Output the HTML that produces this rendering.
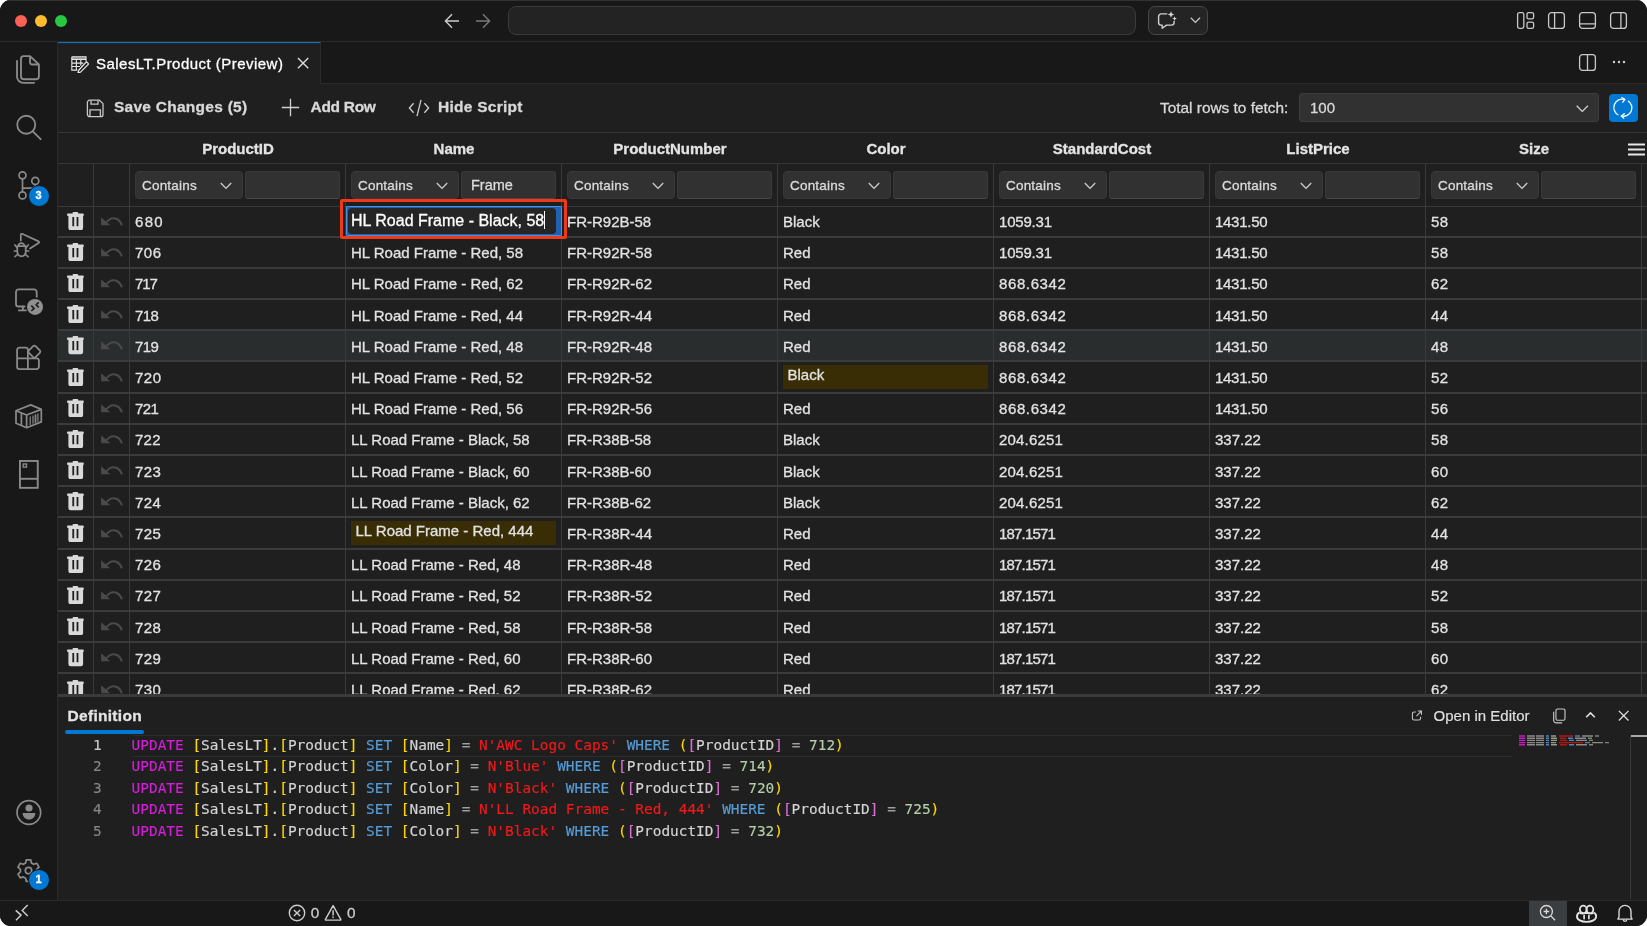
<!DOCTYPE html>
<html lang="en"><head><meta charset="utf-8"><title>SalesLT.Product (Preview)</title>
<style>
*{box-sizing:border-box;margin:0;padding:0}
html,body{width:1647px;height:926px;overflow:hidden;background:#ffffff}
body{font-family:"Liberation Sans",sans-serif;color:#cccccc;position:relative;-webkit-text-stroke:0.300px currentColor}
.win{will-change:transform;position:absolute;left:0;top:0;width:1647px;height:926px;background:#1f1f1f;border-radius:11px;overflow:hidden}
.abs{position:absolute}
svg{display:block}
/* title bar */
.titlebar{position:absolute;left:0;top:0;width:1647px;height:42px;background:#181818;border-bottom:1px solid #2b2b2b;box-shadow:inset 0 1px 0 #323232}
.tl{position:absolute;top:14.700px;width:12.600px;height:12.600px;border-radius:50%}
.cmd{position:absolute;left:508px;top:6px;width:628px;height:29px;border:1px solid #3b3b3b;border-radius:8px;background:#232323}
.chatbtn{position:absolute;left:1148px;top:6px;width:60px;height:29px;border:1px solid #484848;border-radius:7px;background:#242424}
/* activity bar */
.actbar{position:absolute;left:0;top:42px;width:58px;height:858px;background:#181818;border-right:1px solid #2b2b2b}
.actbar svg{position:absolute}
.badge{position:absolute;width:22px;height:22px;border-radius:50%;background:#0078d4;border:1.500px solid #181818;color:#fff;font-size:11px;font-weight:bold;text-align:center;line-height:19px}
/* tabs */
.tabbar{position:absolute;left:58px;top:42px;width:1589px;height:42px;background:#181818;border-bottom:1px solid #2b2b2b}
.tab{position:absolute;left:0;top:0;width:263px;height:42px;background:#1f1f1f;border-top:1px solid #256a9e;border-right:1px solid #2b2b2b}
.tab .lbl{position:absolute;left:38px;top:11px;font-size:15px;letter-spacing:0.47px;line-height:20px;color:#ffffff;white-space:nowrap}
/* toolbar */
.toolbar{position:absolute;left:58px;top:84px;width:1589px;height:49px;background:#1f1f1f;border-bottom:1px solid #353535}
.tbtn{position:absolute;top:13.100px;font-size:15.500px;letter-spacing:0.26px;line-height:20px;font-weight:bold;color:#d8d8d8;white-space:nowrap}
.tlabel{position:absolute;top:14px;font-size:15.4px;line-height:20px;color:#d8d8d8;white-space:nowrap}
.rowsel{position:absolute;left:1241px;top:9px;width:300px;height:29px;background:#313131;border:1px solid #3c3c3c;border-radius:3px;color:#d8d8d8;font-size:15px;line-height:27px;padding-left:10px}
.refresh{position:absolute;left:1551px;top:9.600px;width:28.600px;height:28.500px;background:#0078d4;border-radius:4px}
/* grid */
.grid{position:absolute;left:58px;top:133px;width:1589px;height:562px;overflow:hidden;background:#1f1f1f}
.ghead{position:absolute;left:0;top:0;width:1589px;height:31px;border-bottom:1px solid #353535}
.hc{position:absolute;top:0;height:30px;line-height:31px;text-align:center;font-weight:bold;font-size:15px;color:#e4e4e4}
.hmenu{position:absolute;left:1570px;top:10px}
.gfilter{position:absolute;left:0;top:31px;width:1589px;height:43px;border-bottom:1px solid #3a3a3a}
.vl{position:absolute;top:0;width:1px;height:100%;background:#383838}
.fsel{position:absolute;top:7px;width:107.5px;height:28px;background:#313131;border-radius:4px;border-bottom:1px solid #3f3f3f;color:#dcdcdc;font-size:13.5px;letter-spacing:0.2px;line-height:27.600px;padding-left:6px;border:1px solid #383838}
.fsel svg{position:absolute;left:84px;top:9.500px}
.finp{position:absolute;top:7px;width:95px;height:28px;background:#313131;border-radius:3px;border:1px solid #3a3a3a;border-bottom:1px solid #484848;color:#dcdcdc;font-size:14.500px;line-height:27.200px;padding-left:9px}
.grow{position:absolute;left:0;width:1589px;height:31.2px;border-bottom:2px solid #3b3b3b}
.vline{position:absolute;top:31px;width:1px;height:540px;background:#3a3a3a}
.grow.hov{background:#2a2d2e}
.grow .c{position:absolute;top:0;height:100%;font-size:15px;line-height:30px;color:#e2e2e2;white-space:nowrap;overflow:hidden}
.grow .c .t{position:absolute;left:5px;top:0.5px}
.grow .ic svg{position:absolute}
.dirty{position:absolute;left:5px;top:2px;right:6px;height:24px;background:#382d04;line-height:19px;padding-left:4.500px;color:#e2e2e2}
/* definition panel */
.split{position:absolute;left:58px;top:694px;width:1589px;height:3px;background:#3a3a3a}
.panel{position:absolute;left:58px;top:697px;width:1589px;height:203px;background:#1f1f1f}
.code{position:absolute;left:0;top:37.500px;-webkit-text-stroke:0.150px;font-family:"DejaVu Sans Mono","Liberation Mono",monospace;font-size:14.430px;line-height:21.500px;white-space:pre;color:#d4d4d4}
.ln{position:absolute;left:0;top:37.500px;width:43.600px;text-align:right;-webkit-text-stroke:0.150px;font-family:"DejaVu Sans Mono","Liberation Mono",monospace;font-size:14.430px;line-height:21.500px;color:#858585;white-space:pre}
.o{color:#a0a0a0}.k1{color:#d31fd8}.k2{color:#569cd6}.b1{color:#ffd700}.b2{color:#da70d6}.s{color:#f51818}.n{color:#b5cea8}
/* status bar */
.status{position:absolute;left:0;top:900px;width:1647px;height:26px;background:#181818;border-top:1px solid #2b2b2b;font-size:14.5px;color:#cccccc}

</style></head>
<body>
<div class="win">
<!-- ============ TITLE BAR ============ -->
<div class="titlebar">
  <div class="tl" style="left:14.700px;background:#fe5f57"></div>
  <div class="tl" style="left:34.700px;background:#febc2e"></div>
  <div class="tl" style="left:54.700px;background:#28c840"></div>
  <svg class="abs" style="left:444px;top:13px" width="16" height="16" viewBox="0 0 16 16"><path d="M8 1.2L1.4 8L8 14.8M1.6 8H15" fill="none" stroke="#cccccc" stroke-width="1.4"/></svg>
  <svg class="abs" style="left:475px;top:13px" width="16" height="16" viewBox="0 0 16 16"><path d="M8 1.2L14.6 8L8 14.8M14.4 8H1" fill="none" stroke="#7a7a7a" stroke-width="1.4"/></svg>
  <div class="cmd"></div>
  <div class="chatbtn">
    <svg class="abs" style="left:8px;top:4px" width="22" height="20" viewBox="0 0 22 20"><path d="M10.3 2.9H4.2a2.6 2.6 0 0 0-2.6 2.6v6a2.6 2.6 0 0 0 2.6 2.6h1v3.2l4.3-3.2h5a2.6 2.6 0 0 0 2.6-2.6V10" fill="none" stroke="#d0d0d0" stroke-width="1.4" stroke-linejoin="round"/><path d="M14 0.3l.9 2.3 2.3.9-2.3.9-.9 2.3-.9-2.3-2.3-.9 2.3-.9z M17.6 5.2l.7 1.7 1.7.7-1.7.7-.7 1.7-.7-1.7-1.7-.7 1.7-.7z" fill="#d8d8d8"/></svg>
    <svg class="abs" style="left:40.500px;top:10px" width="11" height="7" viewBox="0 0 11 7"><path d="M0.800 0.800l4.600 4.600 4.600-4.600" fill="none" stroke="#c8c8c8" stroke-width="1.300"/></svg>
  </div>
  <!-- layout icons -->
  <svg class="abs" style="left:1516px;top:11px" width="19" height="19" viewBox="0 0 19 19"><rect x="1.6" y="1.6" width="6.2" height="15.8" rx="1.8" fill="none" stroke="#c8c8c8" stroke-width="1.3"/><rect x="11" y="1.6" width="6.6" height="6.2" rx="1.6" fill="none" stroke="#c8c8c8" stroke-width="1.3"/><rect x="11" y="11.2" width="6.6" height="6.2" rx="1.6" fill="none" stroke="#c8c8c8" stroke-width="1.3"/></svg>
  <svg class="abs" style="left:1547px;top:11px" width="19" height="19" viewBox="0 0 19 19"><rect x="1.6" y="1.6" width="15.8" height="15.8" rx="3" fill="none" stroke="#c8c8c8" stroke-width="1.3"/><path d="M7.6 1.6v15.8" stroke="#c8c8c8" stroke-width="1.3"/></svg>
  <svg class="abs" style="left:1578px;top:11px" width="19" height="19" viewBox="0 0 19 19"><rect x="1.6" y="1.6" width="15.8" height="15.8" rx="3" fill="none" stroke="#c8c8c8" stroke-width="1.3"/><path d="M1.6 12.8h15.8" stroke="#c8c8c8" stroke-width="1.3"/></svg>
  <svg class="abs" style="left:1609.400px;top:11px" width="19" height="19" viewBox="0 0 19 19"><rect x="1.6" y="1.6" width="15.8" height="15.8" rx="3" fill="none" stroke="#c8c8c8" stroke-width="1.3"/><path d="M11.900 1.6v15.8" stroke="#c8c8c8" stroke-width="1.3"/></svg>
</div>

<!-- ============ ACTIVITY BAR ============ -->
<div class="actbar">
  <!-- files -->
  <svg style="left:15px;top:12px" width="27" height="32" viewBox="0 0 27 32"><g fill="none" stroke="#8a8a8a" stroke-width="1.85" stroke-linejoin="round"><path d="M8.600 2.100H15L23.900 10.500V22.600a2.600 2.600 0 0 1-2.600 2.600H8.600a2.600 2.600 0 0 1-2.600-2.600V4.700a2.600 2.600 0 0 1 2.600-2.600z"/><path d="M15 2.100V8.300a2.200 2.200 0 0 0 2.200 2.200H23.900"/><path d="M2 6.200V22.500a6.400 6.400 0 0 0 6.400 6.400H19.800"/></g></svg>
  <!-- search -->
  <svg style="left:15px;top:72px" width="28" height="28" viewBox="0 0 28 28"><circle cx="11.250" cy="10.700" r="9" fill="none" stroke="#8a8a8a" stroke-width="1.85"/><path d="M17.800 17.400l7.800 7.800" stroke="#8a8a8a" stroke-width="1.900" stroke-linecap="round"/></svg>
  <!-- source control -->
  <svg style="left:16px;top:128px" width="26" height="31" viewBox="0 0 26 31"><g fill="none" stroke="#8a8a8a" stroke-width="1.700"><circle cx="6.500" cy="5.300" r="3.500"/><circle cx="6.500" cy="25.400" r="3.500"/><circle cx="19.300" cy="10.900" r="3.500"/><path d="M6.500 8.900V21.800M19.300 14.500C19.300 17 18 18.200 15 18.200H6.500"/></g></svg>
  <div class="badge" style="left:27.500px;top:142.500px">3</div>
  <!-- debug -->
  <svg style="left:12px;top:188px" width="30" height="30" viewBox="0 0 30 30"><g fill="none" stroke="#8a8a8a" stroke-width="1.750" stroke-linecap="round" stroke-linejoin="round"><path d="M8.800 10.500V5Q8.800 3.200 10.600 4L26.600 11.400Q27.800 12.200 26.600 13L18 18.500"/><path d="M5.300 16.200H13.700V22.100a4.200 4.200 0 0 1-8.400 0z"/><path d="M6.500 16a3 2.800 0 0 1 6 0"/><path d="M5.300 18L2.900 14.900M13.700 18L16.200 14.900M5.300 21H2.300M13.700 21H16.700M6 24L3 26.700M13 24L16 26.700" stroke-width="1.600"/></g></svg>
  <!-- remote explorer -->
  <svg style="left:14px;top:246px" width="30" height="28" viewBox="0 0 30 28"><g fill="none" stroke="#8a8a8a" stroke-width="1.800"><path d="M22.700 9.400V4a2.600 2.600 0 0 0-2.600-2.600H4.600a2.600 2.600 0 0 0-2.600 2.600V15.900a2.600 2.600 0 0 0 2.600 2.600H11.300"/><path d="M8.900 18.500V22.400M4.800 22.400H11.900" stroke-linecap="round"/></g><circle cx="21" cy="18.900" r="8" fill="#909090"/><path d="M17.300 17.600L20.100 20.400L17.300 23M24.700 14.400L22.100 16.800L24.700 19.400" fill="none" stroke="#181818" stroke-width="1.500"/></svg>
  <!-- extensions -->
  <svg style="left:15px;top:302px" width="28" height="28" viewBox="0 0 28 28"><g fill="none" stroke="#8a8a8a" stroke-width="1.800"><path d="M4.400 3.700H10.600a2.300 2.300 0 0 1 2.300 2.300V25.100H4.400a2.300 2.300 0 0 1-2.300-2.300V6a2.300 2.300 0 0 1 2.300-2.300z"/><path d="M2.100 14.300H21.600a2.300 2.300 0 0 1 2.300 2.300V22.800a2.300 2.300 0 0 1-2.300 2.300H12.900"/><rect x="14.650" y="2.900" width="9.400" height="9.400" rx="1.700" transform="rotate(45 19.350 7.600)"/></g></svg>
  <!-- container -->
  <svg style="left:14px;top:361px" width="30" height="27" viewBox="0 0 30 27"><g fill="none" stroke="#8a8a8a" stroke-width="1.700" stroke-linejoin="round"><path d="M2 7.700L16.700 1.900L27.300 6.400V18.900L12.600 24.700L2 20.200z"/><path d="M2 7.700L12.600 12L27.300 6.400M12.600 12V24.700M7.400 10V22.500"/><path d="M16.200 13.500v8.400M19 12.400v8.400M23.900 10.600v8.200" stroke-width="1.200"/><path d="M21.500 11.400v8.400" stroke-width="1.700"/></g></svg>
  <!-- notebook -->
  <svg style="left:18px;top:417px" width="22" height="31" viewBox="0 0 22 31"><g fill="none" stroke="#8a8a8a"><rect x="1.950" y="1.950" width="17.800" height="26.900" stroke-width="1.900"/><path d="M1.950 19.800h17.800" stroke-width="1.900"/><rect x="5.200" y="5" width="3.300" height="3.100" stroke-width="1.400"/></g></svg>
  <!-- account -->
  <svg style="left:15px;top:757px" width="28" height="28" viewBox="0 0 28 28"><circle cx="13.850" cy="13.500" r="11.800" fill="none" stroke="#8a8a8a" stroke-width="1.700"/><circle cx="14" cy="9" r="3.600" fill="#8a8a8a"/><path d="M7.600 14H20.400c0 3.800-2.800 6.500-6.400 6.500S7.600 17.800 7.600 14z" fill="#8a8a8a"/></svg>
  <!-- settings gear -->
  <svg style="left:15.300px;top:815.800px" width="27" height="27" viewBox="0 0 27 27"><path d="M11.300 1.800h4.400l.7 3.200 2.300 1.300 3.100-1 2.200 3.800-2.400 2.200v2.600l2.400 2.200-2.200 3.800-3.100-1-2.300 1.300-.7 3.200h-4.400l-.7-3.200-2.300-1.300-3.100 1-2.200-3.800 2.400-2.200v-2.600l-2.400-2.200 2.200-3.800 3.100 1 2.300-1.300z" fill="none" stroke="#8a8a8a" stroke-width="1.700" stroke-linejoin="round"/><circle cx="13.500" cy="12.600" r="3.200" fill="none" stroke="#8a8a8a" stroke-width="1.700"/></svg>
  <div class="badge" style="left:27.500px;top:827.300px">1</div>
</div>

<!-- ============ TAB BAR ============ -->
<div class="tabbar">
  <div class="tab">
    <div class="abs" style="left:0;top:0;width:262px;height:1px;background:#0a2c4c"></div>
    <svg class="abs" style="left:12.500px;top:12.500px" width="18.700" height="17.600" viewBox="0 0 20 19"><rect x="0.800" y="0.800" width="15.300" height="2.800" fill="#8a8a8a"/><path d="M0.800 0.800H16.100V5.800M0.800 0.800V15.300H6.800M0.800 3.600H16.100M0.800 7.700H13.200M0.800 11.300H9.600M5.700 3.600V15.300M10.500 3.600V10.400" fill="none" stroke="#e4e4e4" stroke-width="1.250"/><path d="M16.600 6.200L19 8.600L10.200 17.400L7.400 18.200L8.200 15.400z" fill="#1f1f1f" stroke="#e8e8e8" stroke-width="1.250" stroke-linejoin="round"/></svg>
    <span class="lbl">SalesLT.Product (Preview)</span>
    <svg class="abs" style="left:238.600px;top:14px" width="12.200" height="12.200" viewBox="0 0 13 13"><path d="M1 1l11 11M12 1L1 12" stroke="#e0e0e0" stroke-width="1.400"/></svg>
  </div>
  <svg class="abs" style="left:1520px;top:11px" width="19" height="19" viewBox="0 0 19 19"><rect x="1.600" y="1.600" width="15.800" height="15.800" rx="3" fill="none" stroke="#c8c8c8" stroke-width="1.300"/><path d="M9.500 1.600v15.800" stroke="#c8c8c8" stroke-width="1.300"/></svg>
  <svg class="abs" style="left:1554px;top:18px" width="14" height="4" viewBox="0 0 14 4"><circle cx="2" cy="2" r="1.200" fill="#d0d0d0"/><circle cx="7" cy="2" r="1.200" fill="#d0d0d0"/><circle cx="12" cy="2" r="1.200" fill="#d0d0d0"/></svg>
</div>

<!-- ============ TOOLBAR ============ -->
<div class="toolbar">
  <svg class="abs" style="left:28px;top:15px" width="19" height="19" viewBox="0 0 19 19"><path d="M3.600 1.200h9.800l3.600 3.400v10.800a2.200 2.200 0 0 1-2.200 2.200H3.600a2.200 2.200 0 0 1-2.200-2.200V3.400a2.200 2.200 0 0 1 2.200-2.200z" fill="none" stroke="#c8c8c8" stroke-width="1.300" stroke-linejoin="round"/><path d="M5 1.400v3.800h7V1.400M4 17.400v-6.600h10.400v6.600" fill="none" stroke="#c8c8c8" stroke-width="1.300"/></svg>
  <span class="tbtn" style="left:56px">Save Changes (5)</span>
  <svg class="abs" style="left:223px;top:14px" width="19" height="19" viewBox="0 0 19 19"><path d="M9.500 0.800v17.400M0.800 9.500h17.400" stroke="#d0d0d0" stroke-width="1.300"/></svg>
  <span class="tbtn" style="left:252.500px;letter-spacing:-0.300px">Add Row</span>
  <svg class="abs" style="left:350px;top:15px" width="22" height="18" viewBox="0 0 22 18"><path d="M5.600 4.200L1.400 9l4.200 4.800M16.400 4.200L20.600 9l-4.200 4.800M13 0.800L9 17.200" fill="none" stroke="#d0d0d0" stroke-width="1.300"/></svg>
  <span class="tbtn" style="left:380px">Hide Script</span>
  <span class="tlabel" style="left:1102px">Total rows to fetch:</span>
  <div class="rowsel">100<svg class="abs" style="left:276.100px;top:10.900px" width="12.600" height="7.400" viewBox="0 0 12.600 7.400"><path d="M0.700 0.700l5.600 5.700 5.600-5.700" fill="none" stroke="#d0d0d0" stroke-width="1.300"/></svg></div>
  <div class="refresh"><svg class="abs" style="left:3px;top:3px" width="23" height="23" viewBox="0 0 23 23"><g fill="none" stroke="#eaf5ff" stroke-width="1.400"><path d="M12.700 2.500A8.400 8.400 0 0 0 6.400 18"/><path d="M16 3.800A8.400 8.400 0 0 1 9.300 19"/><path d="M9.400 0.400L12.800 2.500L10.400 5.600"/><path d="M12.800 16.400L9.300 19L12.200 21.600"/></g></svg></div>
</div>

<div class="grid">
<div class="ghead">
<div class="hc" style="left:72px;width:216px">ProductID</div>
<div class="hc" style="left:288px;width:216px">Name</div>
<div class="hc" style="left:504px;width:216px">ProductNumber</div>
<div class="hc" style="left:720px;width:216px">Color</div>
<div class="hc" style="left:936px;width:216px">StandardCost</div>
<div class="hc" style="left:1152px;width:216px">ListPrice</div>
<div class="hc" style="left:1368px;width:216px">Size</div>
<svg class="hmenu" width="17" height="13" viewBox="0 0 17 13"><path d="M0 1.5h17M0 6.5h17M0 11.5h17" stroke="#e6e6e6" stroke-width="1.9"/></svg>
</div>
<div class="gfilter">
<div class="vl" style="left:35px"></div><div class="vl" style="left:71px"></div>
<div class="vl" style="left:287px"></div>
<div class="fsel" style="left:77px"><span>Contains</span><svg width="12" height="8" viewBox="0 0 12 8"><path d="M0.800 1l5.200 5.400L11.200 1" fill="none" stroke="#d0d0d0" stroke-width="1.3"/></svg></div>
<div class="finp" style="left:187px"></div>
<div class="vl" style="left:503px"></div>
<div class="fsel" style="left:293px"><span>Contains</span><svg width="12" height="8" viewBox="0 0 12 8"><path d="M0.800 1l5.200 5.400L11.200 1" fill="none" stroke="#d0d0d0" stroke-width="1.3"/></svg></div>
<div class="finp" style="left:403px">Frame</div>
<div class="vl" style="left:719px"></div>
<div class="fsel" style="left:509px"><span>Contains</span><svg width="12" height="8" viewBox="0 0 12 8"><path d="M0.800 1l5.200 5.400L11.200 1" fill="none" stroke="#d0d0d0" stroke-width="1.3"/></svg></div>
<div class="finp" style="left:619px"></div>
<div class="vl" style="left:935px"></div>
<div class="fsel" style="left:725px"><span>Contains</span><svg width="12" height="8" viewBox="0 0 12 8"><path d="M0.800 1l5.200 5.400L11.200 1" fill="none" stroke="#d0d0d0" stroke-width="1.3"/></svg></div>
<div class="finp" style="left:835px"></div>
<div class="vl" style="left:1151px"></div>
<div class="fsel" style="left:941px"><span>Contains</span><svg width="12" height="8" viewBox="0 0 12 8"><path d="M0.800 1l5.200 5.400L11.200 1" fill="none" stroke="#d0d0d0" stroke-width="1.3"/></svg></div>
<div class="finp" style="left:1051px"></div>
<div class="vl" style="left:1367px"></div>
<div class="fsel" style="left:1157px"><span>Contains</span><svg width="12" height="8" viewBox="0 0 12 8"><path d="M0.800 1l5.200 5.400L11.200 1" fill="none" stroke="#d0d0d0" stroke-width="1.3"/></svg></div>
<div class="finp" style="left:1267px"></div>
<div class="vl" style="left:1583px"></div>
<div class="fsel" style="left:1373px"><span>Contains</span><svg width="12" height="8" viewBox="0 0 12 8"><path d="M0.800 1l5.200 5.400L11.200 1" fill="none" stroke="#d0d0d0" stroke-width="1.3"/></svg></div>
<div class="finp" style="left:1483px"></div>
</div>
<div class="grow" style="top:73.5px">
<div class="c ic" style="left:0;width:36px"><svg style="left:9px;top:5.200px" width="17" height="18.200" viewBox="0 0 17 18.200"><path d="M5.600 0.900a.9.9 0 0 1 .9-.9h3.800a.9.9 0 0 1 .9.900v.700h4.800a.8.800 0 0 1 .8.800v1.300H0V2.400a.8.800 0 0 1 .8-.8h4.800z M1.400 3.700h14.700V16a2.200 2.200 0 0 1-2.200 2.200H3.600A2.200 2.200 0 0 1 1.400 16z" fill="#d9d9d9"/><path d="M6.250 5v9.200M10.500 5v9.200" stroke="#1f1f1f" stroke-width="1.800"/></svg></div>
<div class="c ic" style="left:36px;width:36px"><svg style="left:7px;top:10px" width="22" height="9" viewBox="0 0 22 9"><path d="M0.100 0.200V8.300H9.200z" fill="#4a4a4a"/><path d="M5 5.600C8 1.900 12 0.500 15.200 1.700c2.800 1.100 4.700 3.600 5.700 6.700" fill="none" stroke="#4a4a4a" stroke-width="2"/></svg></div>
<div class="c" style="left:72px;width:216px"><span class="t" style="letter-spacing:1.3px">680</span></div>
<div class="c" style="left:288px;width:216px"></div>
<div class="c" style="left:504px;width:216px"><span class="t">FR-R92B-58</span></div>
<div class="c" style="left:720px;width:216px"><span class="t">Black</span></div>
<div class="c" style="left:936px;width:216px"><span class="t" style="letter-spacing:-0.2px">1059.31</span></div>
<div class="c" style="left:1152px;width:216px"><span class="t" style="letter-spacing:-0.28px">1431.50</span></div>
<div class="c" style="left:1368px;width:216px"><span class="t" style="letter-spacing:0.5px">58</span></div>
</div>
<div class="grow" style="top:104.7px">
<div class="c ic" style="left:0;width:36px"><svg style="left:9px;top:5.200px" width="17" height="18.200" viewBox="0 0 17 18.200"><path d="M5.600 0.900a.9.9 0 0 1 .9-.9h3.800a.9.9 0 0 1 .9.900v.700h4.800a.8.800 0 0 1 .8.800v1.300H0V2.400a.8.800 0 0 1 .8-.8h4.800z M1.400 3.700h14.700V16a2.200 2.200 0 0 1-2.200 2.200H3.600A2.200 2.200 0 0 1 1.400 16z" fill="#d9d9d9"/><path d="M6.250 5v9.200M10.500 5v9.200" stroke="#1f1f1f" stroke-width="1.800"/></svg></div>
<div class="c ic" style="left:36px;width:36px"><svg style="left:7px;top:10px" width="22" height="9" viewBox="0 0 22 9"><path d="M0.100 0.200V8.300H9.200z" fill="#4a4a4a"/><path d="M5 5.600C8 1.900 12 0.500 15.200 1.700c2.800 1.100 4.700 3.600 5.700 6.700" fill="none" stroke="#4a4a4a" stroke-width="2"/></svg></div>
<div class="c" style="left:72px;width:216px"><span class="t" style="letter-spacing:0.5px">706</span></div>
<div class="c" style="left:288px;width:216px"><span class="t">HL Road Frame - Red, 58</span></div>
<div class="c" style="left:504px;width:216px"><span class="t">FR-R92R-58</span></div>
<div class="c" style="left:720px;width:216px"><span class="t">Red</span></div>
<div class="c" style="left:936px;width:216px"><span class="t" style="letter-spacing:-0.2px">1059.31</span></div>
<div class="c" style="left:1152px;width:216px"><span class="t" style="letter-spacing:-0.28px">1431.50</span></div>
<div class="c" style="left:1368px;width:216px"><span class="t" style="letter-spacing:0.5px">58</span></div>
</div>
<div class="grow" style="top:135.9px">
<div class="c ic" style="left:0;width:36px"><svg style="left:9px;top:5.200px" width="17" height="18.200" viewBox="0 0 17 18.200"><path d="M5.600 0.900a.9.9 0 0 1 .9-.9h3.800a.9.9 0 0 1 .9.900v.700h4.800a.8.800 0 0 1 .8.800v1.300H0V2.400a.8.800 0 0 1 .8-.8h4.800z M1.400 3.700h14.700V16a2.200 2.200 0 0 1-2.200 2.200H3.600A2.200 2.200 0 0 1 1.400 16z" fill="#d9d9d9"/><path d="M6.250 5v9.200M10.500 5v9.200" stroke="#1f1f1f" stroke-width="1.800"/></svg></div>
<div class="c ic" style="left:36px;width:36px"><svg style="left:7px;top:10px" width="22" height="9" viewBox="0 0 22 9"><path d="M0.100 0.200V8.300H9.200z" fill="#4a4a4a"/><path d="M5 5.600C8 1.900 12 0.500 15.200 1.700c2.800 1.100 4.700 3.600 5.700 6.700" fill="none" stroke="#4a4a4a" stroke-width="2"/></svg></div>
<div class="c" style="left:72px;width:216px"><span class="t" style="letter-spacing:-1.1px">717</span></div>
<div class="c" style="left:288px;width:216px"><span class="t">HL Road Frame - Red, 62</span></div>
<div class="c" style="left:504px;width:216px"><span class="t">FR-R92R-62</span></div>
<div class="c" style="left:720px;width:216px"><span class="t">Red</span></div>
<div class="c" style="left:936px;width:216px"><span class="t" style="letter-spacing:0.61px">868.6342</span></div>
<div class="c" style="left:1152px;width:216px"><span class="t" style="letter-spacing:-0.28px">1431.50</span></div>
<div class="c" style="left:1368px;width:216px"><span class="t" style="letter-spacing:0.5px">62</span></div>
</div>
<div class="grow" style="top:167.1px">
<div class="c ic" style="left:0;width:36px"><svg style="left:9px;top:5.200px" width="17" height="18.200" viewBox="0 0 17 18.200"><path d="M5.600 0.900a.9.9 0 0 1 .9-.9h3.800a.9.9 0 0 1 .9.900v.700h4.800a.8.800 0 0 1 .8.800v1.300H0V2.400a.8.800 0 0 1 .8-.8h4.800z M1.400 3.700h14.700V16a2.200 2.200 0 0 1-2.200 2.200H3.600A2.200 2.200 0 0 1 1.400 16z" fill="#d9d9d9"/><path d="M6.250 5v9.200M10.500 5v9.200" stroke="#1f1f1f" stroke-width="1.800"/></svg></div>
<div class="c ic" style="left:36px;width:36px"><svg style="left:7px;top:10px" width="22" height="9" viewBox="0 0 22 9"><path d="M0.100 0.200V8.300H9.200z" fill="#4a4a4a"/><path d="M5 5.600C8 1.900 12 0.500 15.200 1.700c2.800 1.100 4.700 3.600 5.700 6.700" fill="none" stroke="#4a4a4a" stroke-width="2"/></svg></div>
<div class="c" style="left:72px;width:216px"><span class="t" style="letter-spacing:-0.6px">718</span></div>
<div class="c" style="left:288px;width:216px"><span class="t">HL Road Frame - Red, 44</span></div>
<div class="c" style="left:504px;width:216px"><span class="t">FR-R92R-44</span></div>
<div class="c" style="left:720px;width:216px"><span class="t">Red</span></div>
<div class="c" style="left:936px;width:216px"><span class="t" style="letter-spacing:0.61px">868.6342</span></div>
<div class="c" style="left:1152px;width:216px"><span class="t" style="letter-spacing:-0.28px">1431.50</span></div>
<div class="c" style="left:1368px;width:216px"><span class="t" style="letter-spacing:0.5px">44</span></div>
</div>
<div class="grow hov" style="top:198.3px">
<div class="c ic" style="left:0;width:36px"><svg style="left:9px;top:5.200px" width="17" height="18.200" viewBox="0 0 17 18.200"><path d="M5.600 0.900a.9.9 0 0 1 .9-.9h3.800a.9.9 0 0 1 .9.900v.700h4.800a.8.800 0 0 1 .8.800v1.300H0V2.400a.8.800 0 0 1 .8-.8h4.800z M1.400 3.700h14.700V16a2.200 2.200 0 0 1-2.200 2.200H3.600A2.200 2.200 0 0 1 1.400 16z" fill="#d9d9d9"/><path d="M6.250 5v9.200M10.500 5v9.200" stroke="#1f1f1f" stroke-width="1.800"/></svg></div>
<div class="c ic" style="left:36px;width:36px"><svg style="left:7px;top:10px" width="22" height="9" viewBox="0 0 22 9"><path d="M0.100 0.200V8.300H9.200z" fill="#4a4a4a"/><path d="M5 5.600C8 1.900 12 0.500 15.200 1.700c2.800 1.100 4.700 3.600 5.700 6.700" fill="none" stroke="#4a4a4a" stroke-width="2"/></svg></div>
<div class="c" style="left:72px;width:216px"><span class="t" style="letter-spacing:-0.6px">719</span></div>
<div class="c" style="left:288px;width:216px"><span class="t">HL Road Frame - Red, 48</span></div>
<div class="c" style="left:504px;width:216px"><span class="t">FR-R92R-48</span></div>
<div class="c" style="left:720px;width:216px"><span class="t">Red</span></div>
<div class="c" style="left:936px;width:216px"><span class="t" style="letter-spacing:0.61px">868.6342</span></div>
<div class="c" style="left:1152px;width:216px"><span class="t" style="letter-spacing:-0.28px">1431.50</span></div>
<div class="c" style="left:1368px;width:216px"><span class="t" style="letter-spacing:0.5px">48</span></div>
</div>
<div class="grow" style="top:229.5px">
<div class="c ic" style="left:0;width:36px"><svg style="left:9px;top:5.200px" width="17" height="18.200" viewBox="0 0 17 18.200"><path d="M5.600 0.900a.9.9 0 0 1 .9-.9h3.800a.9.9 0 0 1 .9.900v.700h4.800a.8.800 0 0 1 .8.800v1.300H0V2.400a.8.800 0 0 1 .8-.8h4.800z M1.400 3.700h14.700V16a2.200 2.200 0 0 1-2.200 2.200H3.600A2.200 2.200 0 0 1 1.400 16z" fill="#d9d9d9"/><path d="M6.250 5v9.200M10.500 5v9.200" stroke="#1f1f1f" stroke-width="1.800"/></svg></div>
<div class="c ic" style="left:36px;width:36px"><svg style="left:7px;top:10px" width="22" height="9" viewBox="0 0 22 9"><path d="M0.100 0.200V8.300H9.200z" fill="#4a4a4a"/><path d="M5 5.600C8 1.900 12 0.500 15.200 1.700c2.800 1.100 4.700 3.600 5.700 6.700" fill="none" stroke="#4a4a4a" stroke-width="2"/></svg></div>
<div class="c" style="left:72px;width:216px"><span class="t" style="letter-spacing:0.5px">720</span></div>
<div class="c" style="left:288px;width:216px"><span class="t">HL Road Frame - Red, 52</span></div>
<div class="c" style="left:504px;width:216px"><span class="t">FR-R92R-52</span></div>
<div class="c" style="left:720px;width:216px"><span class="dirty">Black</span></div>
<div class="c" style="left:936px;width:216px"><span class="t" style="letter-spacing:0.61px">868.6342</span></div>
<div class="c" style="left:1152px;width:216px"><span class="t" style="letter-spacing:-0.28px">1431.50</span></div>
<div class="c" style="left:1368px;width:216px"><span class="t" style="letter-spacing:0.5px">52</span></div>
</div>
<div class="grow" style="top:260.7px">
<div class="c ic" style="left:0;width:36px"><svg style="left:9px;top:5.200px" width="17" height="18.200" viewBox="0 0 17 18.200"><path d="M5.600 0.900a.9.9 0 0 1 .9-.9h3.800a.9.9 0 0 1 .9.900v.700h4.800a.8.800 0 0 1 .8.800v1.300H0V2.400a.8.800 0 0 1 .8-.8h4.800z M1.400 3.700h14.700V16a2.200 2.200 0 0 1-2.200 2.200H3.600A2.200 2.200 0 0 1 1.400 16z" fill="#d9d9d9"/><path d="M6.250 5v9.200M10.500 5v9.200" stroke="#1f1f1f" stroke-width="1.800"/></svg></div>
<div class="c ic" style="left:36px;width:36px"><svg style="left:7px;top:10px" width="22" height="9" viewBox="0 0 22 9"><path d="M0.100 0.200V8.300H9.200z" fill="#4a4a4a"/><path d="M5 5.600C8 1.900 12 0.500 15.200 1.700c2.800 1.100 4.700 3.600 5.700 6.700" fill="none" stroke="#4a4a4a" stroke-width="2"/></svg></div>
<div class="c" style="left:72px;width:216px"><span class="t" style="letter-spacing:-0.6px">721</span></div>
<div class="c" style="left:288px;width:216px"><span class="t">HL Road Frame - Red, 56</span></div>
<div class="c" style="left:504px;width:216px"><span class="t">FR-R92R-56</span></div>
<div class="c" style="left:720px;width:216px"><span class="t">Red</span></div>
<div class="c" style="left:936px;width:216px"><span class="t" style="letter-spacing:0.61px">868.6342</span></div>
<div class="c" style="left:1152px;width:216px"><span class="t" style="letter-spacing:-0.28px">1431.50</span></div>
<div class="c" style="left:1368px;width:216px"><span class="t" style="letter-spacing:0.5px">56</span></div>
</div>
<div class="grow" style="top:291.9px">
<div class="c ic" style="left:0;width:36px"><svg style="left:9px;top:5.200px" width="17" height="18.200" viewBox="0 0 17 18.200"><path d="M5.600 0.900a.9.9 0 0 1 .9-.9h3.800a.9.9 0 0 1 .9.900v.700h4.800a.8.800 0 0 1 .8.800v1.300H0V2.400a.8.800 0 0 1 .8-.8h4.800z M1.400 3.700h14.700V16a2.200 2.200 0 0 1-2.200 2.200H3.600A2.200 2.200 0 0 1 1.400 16z" fill="#d9d9d9"/><path d="M6.250 5v9.200M10.500 5v9.200" stroke="#1f1f1f" stroke-width="1.800"/></svg></div>
<div class="c ic" style="left:36px;width:36px"><svg style="left:7px;top:10px" width="22" height="9" viewBox="0 0 22 9"><path d="M0.100 0.200V8.300H9.200z" fill="#4a4a4a"/><path d="M5 5.600C8 1.900 12 0.500 15.200 1.700c2.800 1.100 4.700 3.600 5.700 6.700" fill="none" stroke="#4a4a4a" stroke-width="2"/></svg></div>
<div class="c" style="left:72px;width:216px"><span class="t" style="letter-spacing:0.25px">722</span></div>
<div class="c" style="left:288px;width:216px"><span class="t">LL Road Frame - Black, 58</span></div>
<div class="c" style="left:504px;width:216px"><span class="t">FR-R38B-58</span></div>
<div class="c" style="left:720px;width:216px"><span class="t">Black</span></div>
<div class="c" style="left:936px;width:216px"><span class="t" style="letter-spacing:0.19px">204.6251</span></div>
<div class="c" style="left:1152px;width:216px"><span class="t">337.22</span></div>
<div class="c" style="left:1368px;width:216px"><span class="t" style="letter-spacing:0.5px">58</span></div>
</div>
<div class="grow" style="top:323.1px">
<div class="c ic" style="left:0;width:36px"><svg style="left:9px;top:5.200px" width="17" height="18.200" viewBox="0 0 17 18.200"><path d="M5.600 0.900a.9.9 0 0 1 .9-.9h3.800a.9.9 0 0 1 .9.900v.700h4.800a.8.800 0 0 1 .8.800v1.300H0V2.400a.8.800 0 0 1 .8-.8h4.800z M1.400 3.700h14.700V16a2.200 2.200 0 0 1-2.200 2.200H3.600A2.200 2.200 0 0 1 1.400 16z" fill="#d9d9d9"/><path d="M6.250 5v9.200M10.500 5v9.200" stroke="#1f1f1f" stroke-width="1.800"/></svg></div>
<div class="c ic" style="left:36px;width:36px"><svg style="left:7px;top:10px" width="22" height="9" viewBox="0 0 22 9"><path d="M0.100 0.200V8.300H9.200z" fill="#4a4a4a"/><path d="M5 5.600C8 1.900 12 0.500 15.200 1.700c2.800 1.100 4.700 3.600 5.700 6.700" fill="none" stroke="#4a4a4a" stroke-width="2"/></svg></div>
<div class="c" style="left:72px;width:216px"><span class="t" style="letter-spacing:0.4px">723</span></div>
<div class="c" style="left:288px;width:216px"><span class="t">LL Road Frame - Black, 60</span></div>
<div class="c" style="left:504px;width:216px"><span class="t">FR-R38B-60</span></div>
<div class="c" style="left:720px;width:216px"><span class="t">Black</span></div>
<div class="c" style="left:936px;width:216px"><span class="t" style="letter-spacing:0.19px">204.6251</span></div>
<div class="c" style="left:1152px;width:216px"><span class="t">337.22</span></div>
<div class="c" style="left:1368px;width:216px"><span class="t" style="letter-spacing:0.5px">60</span></div>
</div>
<div class="grow" style="top:354.3px">
<div class="c ic" style="left:0;width:36px"><svg style="left:9px;top:5.200px" width="17" height="18.200" viewBox="0 0 17 18.200"><path d="M5.600 0.900a.9.9 0 0 1 .9-.9h3.800a.9.9 0 0 1 .9.900v.700h4.800a.8.800 0 0 1 .8.800v1.300H0V2.400a.8.800 0 0 1 .8-.8h4.800z M1.400 3.700h14.700V16a2.200 2.200 0 0 1-2.200 2.200H3.600A2.200 2.200 0 0 1 1.400 16z" fill="#d9d9d9"/><path d="M6.250 5v9.200M10.500 5v9.200" stroke="#1f1f1f" stroke-width="1.800"/></svg></div>
<div class="c ic" style="left:36px;width:36px"><svg style="left:7px;top:10px" width="22" height="9" viewBox="0 0 22 9"><path d="M0.100 0.200V8.300H9.200z" fill="#4a4a4a"/><path d="M5 5.600C8 1.900 12 0.500 15.200 1.700c2.800 1.100 4.700 3.600 5.700 6.700" fill="none" stroke="#4a4a4a" stroke-width="2"/></svg></div>
<div class="c" style="left:72px;width:216px"><span class="t" style="letter-spacing:0.4px">724</span></div>
<div class="c" style="left:288px;width:216px"><span class="t">LL Road Frame - Black, 62</span></div>
<div class="c" style="left:504px;width:216px"><span class="t">FR-R38B-62</span></div>
<div class="c" style="left:720px;width:216px"><span class="t">Black</span></div>
<div class="c" style="left:936px;width:216px"><span class="t" style="letter-spacing:0.19px">204.6251</span></div>
<div class="c" style="left:1152px;width:216px"><span class="t">337.22</span></div>
<div class="c" style="left:1368px;width:216px"><span class="t" style="letter-spacing:0.5px">62</span></div>
</div>
<div class="grow" style="top:385.5px">
<div class="c ic" style="left:0;width:36px"><svg style="left:9px;top:5.200px" width="17" height="18.200" viewBox="0 0 17 18.200"><path d="M5.600 0.900a.9.9 0 0 1 .9-.9h3.800a.9.9 0 0 1 .9.900v.700h4.800a.8.800 0 0 1 .8.800v1.300H0V2.400a.8.800 0 0 1 .8-.8h4.800z M1.400 3.700h14.700V16a2.200 2.200 0 0 1-2.200 2.200H3.600A2.200 2.200 0 0 1 1.400 16z" fill="#d9d9d9"/><path d="M6.250 5v9.200M10.500 5v9.200" stroke="#1f1f1f" stroke-width="1.800"/></svg></div>
<div class="c ic" style="left:36px;width:36px"><svg style="left:7px;top:10px" width="22" height="9" viewBox="0 0 22 9"><path d="M0.100 0.200V8.300H9.200z" fill="#4a4a4a"/><path d="M5 5.600C8 1.900 12 0.500 15.200 1.700c2.800 1.100 4.700 3.600 5.700 6.700" fill="none" stroke="#4a4a4a" stroke-width="2"/></svg></div>
<div class="c" style="left:72px;width:216px"><span class="t" style="letter-spacing:0.4px">725</span></div>
<div class="c" style="left:288px;width:216px"><span class="dirty">LL Road Frame - Red, 444</span></div>
<div class="c" style="left:504px;width:216px"><span class="t">FR-R38R-44</span></div>
<div class="c" style="left:720px;width:216px"><span class="t">Red</span></div>
<div class="c" style="left:936px;width:216px"><span class="t" style="letter-spacing:-0.81px">187.1571</span></div>
<div class="c" style="left:1152px;width:216px"><span class="t">337.22</span></div>
<div class="c" style="left:1368px;width:216px"><span class="t" style="letter-spacing:0.5px">44</span></div>
</div>
<div class="grow" style="top:416.7px">
<div class="c ic" style="left:0;width:36px"><svg style="left:9px;top:5.200px" width="17" height="18.200" viewBox="0 0 17 18.200"><path d="M5.600 0.900a.9.9 0 0 1 .9-.9h3.800a.9.9 0 0 1 .9.900v.700h4.800a.8.800 0 0 1 .8.800v1.300H0V2.400a.8.800 0 0 1 .8-.8h4.800z M1.400 3.700h14.700V16a2.200 2.200 0 0 1-2.200 2.200H3.600A2.200 2.200 0 0 1 1.400 16z" fill="#d9d9d9"/><path d="M6.250 5v9.200M10.500 5v9.200" stroke="#1f1f1f" stroke-width="1.800"/></svg></div>
<div class="c ic" style="left:36px;width:36px"><svg style="left:7px;top:10px" width="22" height="9" viewBox="0 0 22 9"><path d="M0.100 0.200V8.300H9.200z" fill="#4a4a4a"/><path d="M5 5.600C8 1.900 12 0.500 15.200 1.700c2.800 1.100 4.700 3.600 5.700 6.700" fill="none" stroke="#4a4a4a" stroke-width="2"/></svg></div>
<div class="c" style="left:72px;width:216px"><span class="t" style="letter-spacing:0.4px">726</span></div>
<div class="c" style="left:288px;width:216px"><span class="t">LL Road Frame - Red, 48</span></div>
<div class="c" style="left:504px;width:216px"><span class="t">FR-R38R-48</span></div>
<div class="c" style="left:720px;width:216px"><span class="t">Red</span></div>
<div class="c" style="left:936px;width:216px"><span class="t" style="letter-spacing:-0.81px">187.1571</span></div>
<div class="c" style="left:1152px;width:216px"><span class="t">337.22</span></div>
<div class="c" style="left:1368px;width:216px"><span class="t" style="letter-spacing:0.5px">48</span></div>
</div>
<div class="grow" style="top:447.9px">
<div class="c ic" style="left:0;width:36px"><svg style="left:9px;top:5.200px" width="17" height="18.200" viewBox="0 0 17 18.200"><path d="M5.600 0.900a.9.9 0 0 1 .9-.9h3.800a.9.9 0 0 1 .9.900v.700h4.800a.8.800 0 0 1 .8.800v1.300H0V2.400a.8.800 0 0 1 .8-.8h4.800z M1.400 3.700h14.700V16a2.200 2.200 0 0 1-2.200 2.200H3.600A2.200 2.200 0 0 1 1.400 16z" fill="#d9d9d9"/><path d="M6.250 5v9.200M10.500 5v9.200" stroke="#1f1f1f" stroke-width="1.800"/></svg></div>
<div class="c ic" style="left:36px;width:36px"><svg style="left:7px;top:10px" width="22" height="9" viewBox="0 0 22 9"><path d="M0.100 0.200V8.300H9.200z" fill="#4a4a4a"/><path d="M5 5.600C8 1.900 12 0.500 15.200 1.700c2.800 1.100 4.700 3.600 5.700 6.700" fill="none" stroke="#4a4a4a" stroke-width="2"/></svg></div>
<div class="c" style="left:72px;width:216px"><span class="t" style="letter-spacing:0.4px">727</span></div>
<div class="c" style="left:288px;width:216px"><span class="t">LL Road Frame - Red, 52</span></div>
<div class="c" style="left:504px;width:216px"><span class="t">FR-R38R-52</span></div>
<div class="c" style="left:720px;width:216px"><span class="t">Red</span></div>
<div class="c" style="left:936px;width:216px"><span class="t" style="letter-spacing:-0.81px">187.1571</span></div>
<div class="c" style="left:1152px;width:216px"><span class="t">337.22</span></div>
<div class="c" style="left:1368px;width:216px"><span class="t" style="letter-spacing:0.5px">52</span></div>
</div>
<div class="grow" style="top:479.1px">
<div class="c ic" style="left:0;width:36px"><svg style="left:9px;top:5.200px" width="17" height="18.200" viewBox="0 0 17 18.200"><path d="M5.600 0.900a.9.9 0 0 1 .9-.9h3.800a.9.9 0 0 1 .9.900v.700h4.800a.8.800 0 0 1 .8.800v1.300H0V2.400a.8.800 0 0 1 .8-.8h4.800z M1.400 3.700h14.700V16a2.200 2.200 0 0 1-2.200 2.200H3.600A2.200 2.200 0 0 1 1.400 16z" fill="#d9d9d9"/><path d="M6.250 5v9.200M10.500 5v9.200" stroke="#1f1f1f" stroke-width="1.800"/></svg></div>
<div class="c ic" style="left:36px;width:36px"><svg style="left:7px;top:10px" width="22" height="9" viewBox="0 0 22 9"><path d="M0.100 0.200V8.300H9.200z" fill="#4a4a4a"/><path d="M5 5.600C8 1.900 12 0.500 15.200 1.700c2.800 1.100 4.700 3.600 5.700 6.700" fill="none" stroke="#4a4a4a" stroke-width="2"/></svg></div>
<div class="c" style="left:72px;width:216px"><span class="t" style="letter-spacing:0.4px">728</span></div>
<div class="c" style="left:288px;width:216px"><span class="t">LL Road Frame - Red, 58</span></div>
<div class="c" style="left:504px;width:216px"><span class="t">FR-R38R-58</span></div>
<div class="c" style="left:720px;width:216px"><span class="t">Red</span></div>
<div class="c" style="left:936px;width:216px"><span class="t" style="letter-spacing:-0.81px">187.1571</span></div>
<div class="c" style="left:1152px;width:216px"><span class="t">337.22</span></div>
<div class="c" style="left:1368px;width:216px"><span class="t" style="letter-spacing:0.5px">58</span></div>
</div>
<div class="grow" style="top:510.3px">
<div class="c ic" style="left:0;width:36px"><svg style="left:9px;top:5.200px" width="17" height="18.200" viewBox="0 0 17 18.200"><path d="M5.600 0.900a.9.9 0 0 1 .9-.9h3.800a.9.9 0 0 1 .9.900v.700h4.800a.8.800 0 0 1 .8.800v1.300H0V2.400a.8.800 0 0 1 .8-.8h4.800z M1.400 3.700h14.700V16a2.200 2.200 0 0 1-2.200 2.200H3.600A2.200 2.200 0 0 1 1.400 16z" fill="#d9d9d9"/><path d="M6.250 5v9.200M10.500 5v9.200" stroke="#1f1f1f" stroke-width="1.800"/></svg></div>
<div class="c ic" style="left:36px;width:36px"><svg style="left:7px;top:10px" width="22" height="9" viewBox="0 0 22 9"><path d="M0.100 0.200V8.300H9.200z" fill="#4a4a4a"/><path d="M5 5.600C8 1.900 12 0.500 15.200 1.700c2.800 1.100 4.700 3.600 5.700 6.700" fill="none" stroke="#4a4a4a" stroke-width="2"/></svg></div>
<div class="c" style="left:72px;width:216px"><span class="t" style="letter-spacing:0.4px">729</span></div>
<div class="c" style="left:288px;width:216px"><span class="t">LL Road Frame - Red, 60</span></div>
<div class="c" style="left:504px;width:216px"><span class="t">FR-R38R-60</span></div>
<div class="c" style="left:720px;width:216px"><span class="t">Red</span></div>
<div class="c" style="left:936px;width:216px"><span class="t" style="letter-spacing:-0.81px">187.1571</span></div>
<div class="c" style="left:1152px;width:216px"><span class="t">337.22</span></div>
<div class="c" style="left:1368px;width:216px"><span class="t" style="letter-spacing:0.5px">60</span></div>
</div>
<div class="grow" style="top:541.5px">
<div class="c ic" style="left:0;width:36px"><svg style="left:9px;top:5.200px" width="17" height="18.200" viewBox="0 0 17 18.200"><path d="M5.600 0.900a.9.9 0 0 1 .9-.9h3.800a.9.9 0 0 1 .9.900v.700h4.800a.8.800 0 0 1 .8.800v1.300H0V2.400a.8.800 0 0 1 .8-.8h4.800z M1.400 3.700h14.700V16a2.200 2.200 0 0 1-2.200 2.200H3.600A2.200 2.200 0 0 1 1.400 16z" fill="#d9d9d9"/><path d="M6.250 5v9.200M10.500 5v9.200" stroke="#1f1f1f" stroke-width="1.800"/></svg></div>
<div class="c ic" style="left:36px;width:36px"><svg style="left:7px;top:10px" width="22" height="9" viewBox="0 0 22 9"><path d="M0.100 0.200V8.300H9.200z" fill="#4a4a4a"/><path d="M5 5.600C8 1.900 12 0.500 15.200 1.700c2.800 1.100 4.700 3.600 5.700 6.700" fill="none" stroke="#4a4a4a" stroke-width="2"/></svg></div>
<div class="c" style="left:72px;width:216px"><span class="t" style="letter-spacing:0.4px">730</span></div>
<div class="c" style="left:288px;width:216px"><span class="t">LL Road Frame - Red, 62</span></div>
<div class="c" style="left:504px;width:216px"><span class="t">FR-R38R-62</span></div>
<div class="c" style="left:720px;width:216px"><span class="t">Red</span></div>
<div class="c" style="left:936px;width:216px"><span class="t" style="letter-spacing:-0.81px">187.1571</span></div>
<div class="c" style="left:1152px;width:216px"><span class="t">337.22</span></div>
<div class="c" style="left:1368px;width:216px"><span class="t" style="letter-spacing:0.5px">62</span></div>
</div>
<div class="vline" style="left:35px"></div>
<div class="vline" style="left:71px"></div>
<div class="vline" style="left:287px"></div>
<div class="vline" style="left:503px"></div>
<div class="vline" style="left:719px"></div>
<div class="vline" style="left:935px"></div>
<div class="vline" style="left:1151px"></div>
<div class="vline" style="left:1367px"></div>
<div class="vline" style="left:1583px"></div>
</div>

<!-- editing cell overlay -->
<div class="abs" style="left:339.700px;top:199.400px;width:227.400px;height:39.800px;border:3px solid #ef3a19;border-radius:2px"></div>
<div class="abs" style="left:346px;top:206px;width:216px;height:30px;background:#2060b0;border:1px solid #4a90e0;border-radius:1px"></div>
<div class="abs" style="left:348px;top:208px;width:208px;height:26px;background:#252526;border-radius:4px;color:#ffffff;font-size:16px;line-height:25px;padding-left:3px;white-space:nowrap">HL Road Frame - Black, 58<span style="display:inline-block;width:1px;height:18px;background:#fff;vertical-align:-3px"></span></div>

<!-- ============ DEFINITION PANEL ============ -->
<div class="split"></div>
<div class="panel">
  <div class="abs" style="left:9.500px;top:8.700px;font-size:15.500px;letter-spacing:0.300px;font-weight:bold;line-height:20px;color:#e4e4e4">Definition</div>
  <div class="abs" style="left:7px;top:33px;width:79px;height:4px;border-radius:2px;background:#0078d4"></div>
  <svg class="abs" style="left:1352.600px;top:13px" width="11.500" height="11.500" viewBox="0 0 13 13"><path d="M5.400 2.200H3.600a2 2 0 0 0-2 2v5.200a2 2 0 0 0 2 2h5.200a2 2 0 0 0 2-2V7.600M7.600 1.200h4.200v4.200M11.600 1.400L6.200 6.800" fill="none" stroke="#c8c8c8" stroke-width="1.200"/></svg>
  <div class="abs" style="left:1375.600px;top:9px;font-size:15px;line-height:20px;color:#e0e0e0;white-space:nowrap;-webkit-text-stroke:0.150px">Open in Editor</div>
  <svg class="abs" style="left:1493.500px;top:10.500px" width="14.500" height="16" viewBox="0 0 15 17"><rect x="4" y="1" width="9.600" height="12" rx="1.600" fill="none" stroke="#c8c8c8" stroke-width="1.200"/><path d="M1.600 4v9.400a2.400 2.400 0 0 0 2.400 2.400h6.600" fill="none" stroke="#c8c8c8" stroke-width="1.200"/></svg>
  <svg class="abs" style="left:1527px;top:13.500px" width="11" height="7.600" viewBox="0 0 13 9"><path d="M1.400 7.400l5.100-5.200 5.100 5.200" fill="none" stroke="#e0e0e0" stroke-width="1.900"/></svg>
  <svg class="abs" style="left:1559.700px;top:12.600px" width="11.400" height="11.400" viewBox="0 0 13 13"><path d="M1 1l11 11M12 1L1 12" stroke="#e0e0e0" stroke-width="1.500"/></svg>
  <!-- current line box -->
  <div class="abs" style="left:74px;top:38px;width:1380px;height:21.500px;border-top:1px solid #2b2b2b;border-bottom:1px solid #2b2b2b"></div>
  <div class="ln"><span style="color:#cccccc">1</span>
2
3
4
5</div>
  <div class="code" style="left:73.600px"><span class="k1">UPDATE</span> <span class="b1">[</span>SalesLT<span class="b1">]</span>.<span class="b1">[</span>Product<span class="b1">]</span> <span class="k2">SET</span> <span class="b1">[</span>Name<span class="b1">]</span> <span class="o">=</span> <span class="s">N'AWC Logo Caps'</span> <span class="k2">WHERE</span> <span class="b1">(</span><span class="b2">[</span>ProductID<span class="b2">]</span> <span class="o">=</span> <span class="n">712</span><span class="b1">)</span>
<span class="k1">UPDATE</span> <span class="b1">[</span>SalesLT<span class="b1">]</span>.<span class="b1">[</span>Product<span class="b1">]</span> <span class="k2">SET</span> <span class="b1">[</span>Color<span class="b1">]</span> <span class="o">=</span> <span class="s">N'Blue'</span> <span class="k2">WHERE</span> <span class="b1">(</span><span class="b2">[</span>ProductID<span class="b2">]</span> <span class="o">=</span> <span class="n">714</span><span class="b1">)</span>
<span class="k1">UPDATE</span> <span class="b1">[</span>SalesLT<span class="b1">]</span>.<span class="b1">[</span>Product<span class="b1">]</span> <span class="k2">SET</span> <span class="b1">[</span>Color<span class="b1">]</span> <span class="o">=</span> <span class="s">N'Black'</span> <span class="k2">WHERE</span> <span class="b1">(</span><span class="b2">[</span>ProductID<span class="b2">]</span> <span class="o">=</span> <span class="n">720</span><span class="b1">)</span>
<span class="k1">UPDATE</span> <span class="b1">[</span>SalesLT<span class="b1">]</span>.<span class="b1">[</span>Product<span class="b1">]</span> <span class="k2">SET</span> <span class="b1">[</span>Name<span class="b1">]</span> <span class="o">=</span> <span class="s">N'LL Road Frame - Red, 444'</span> <span class="k2">WHERE</span> <span class="b1">(</span><span class="b2">[</span>ProductID<span class="b2">]</span> <span class="o">=</span> <span class="n">725</span><span class="b1">)</span>
<span class="k1">UPDATE</span> <span class="b1">[</span>SalesLT<span class="b1">]</span>.<span class="b1">[</span>Product<span class="b1">]</span> <span class="k2">SET</span> <span class="b1">[</span>Color<span class="b1">]</span> <span class="o">=</span> <span class="s">N'Black'</span> <span class="k2">WHERE</span> <span class="b1">(</span><span class="b2">[</span>ProductID<span class="b2">]</span> <span class="o">=</span> <span class="n">732</span><span class="b1">)</span></div>
  <!-- minimap -->
  <svg class="abs" style="left:1461px;top:38px" width="96" height="12" viewBox="0 0 96 12"><g stroke-width="1.400"><path d="M0 1h6M0 3.200h6M0 5.400h6M0 7.600h6M0 9.800h6" stroke="#c21cc2"/><path d="M8 1h17M8 3.200h17M8 5.400h17M8 7.600h17M8 9.800h17" stroke="#8a8a8a" stroke-dasharray="8 1"/><path d="M27 1h3M27 3.200h3M27 5.400h3M27 7.600h3M27 9.800h3" stroke="#4a86b8"/><path d="M32 1h5M32 3.200h6M32 5.400h6M32 7.600h5M32 9.800h6" stroke="#9a9a8a"/><path d="M40 1h14M41 3.200h6M41 5.400h7M40 7.600h24M41 9.800h7" stroke="#b01818"/><path d="M56 1h5M49 3.200h5M50 5.400h5M66 7.600h5M50 9.800h5" stroke="#4a86b8"/><path d="M63 1h11M56 3.200h11M57 5.400h11M73 7.600h11M57 9.800h11" stroke="#8a8a8a"/><path d="M76 1h4M69 3.200h4M70 5.400h4M86 7.600h4M70 9.800h4" stroke="#7a8a70"/></g></svg>
  <div class="abs" style="left:1572px;top:38px;width:1px;height:164px;background:#3a3a3a"></div>
  <div class="abs" style="left:1573px;top:38px;width:16px;height:2px;background:#a8a8a8"></div>
</div>

<!-- ============ STATUS BAR ============ -->
<div class="status">
  <svg class="abs" style="left:14px;top:3px" width="16" height="18" viewBox="0 0 16 18"><path d="M1.700 6.400L7.100 11.100L2 16.200M13.700 0.900L8.200 6.400L13.700 11.900" fill="none" stroke="#d0d0d0" stroke-width="1.400"/></svg>
  <svg class="abs" style="left:288px;top:3.300px" width="18" height="18" viewBox="0 0 18 18"><circle cx="9" cy="9" r="7.700" fill="none" stroke="#cccccc" stroke-width="1.400"/><path d="M5.900 5.900l6.200 6.200M12.100 5.900l-6.200 6.200" stroke="#cccccc" stroke-width="1.400"/></svg>
  <span class="abs" style="left:310.800px;top:2.600px;line-height:18px;font-size:15.300px">0</span>
  <svg class="abs" style="left:324px;top:3.200px" width="18" height="18" viewBox="0 0 18 18"><path d="M9.100 1.600L16.800 15.400a.5.500 0 0 1-.4.700H1.800a.5.500 0 0 1-.4-.7z" fill="none" stroke="#cccccc" stroke-width="1.400" stroke-linejoin="round"/><path d="M9.100 6.200v5.200M9.100 12.600v1.500" stroke="#cccccc" stroke-width="1.500"/></svg>
  <span class="abs" style="left:347px;top:2.600px;line-height:18px;font-size:15.300px">0</span>
  <div class="abs" style="left:1529px;top:0;width:38px;height:26px;background:#3b3e40"></div>
  <svg class="abs" style="left:1539px;top:3.200px" width="18" height="18" viewBox="0 0 18 18"><circle cx="7.400" cy="7.500" r="6" fill="none" stroke="#d8d8d8" stroke-width="1.300"/><path d="M11.800 11.900l4.300 4.300M7.400 4.700v5.600M4.600 7.500h5.600" stroke="#d8d8d8" stroke-width="1.300"/></svg>
  <svg class="abs" style="left:1576px;top:3px" width="21" height="19" viewBox="0 0 21 19"><g fill="none" stroke="#e4e4e4"><ellipse cx="7.300" cy="5.400" rx="3.400" ry="3.700" stroke-width="1.800"/><ellipse cx="13.900" cy="5.400" rx="3.400" ry="3.700" stroke-width="1.800"/><path d="M3.800 8.400C1.700 9.300 1 10.600 1 12.400C1 15.600 5.200 17.900 10.600 17.900S20.200 15.600 20.200 12.400C20.200 10.600 19.500 9.300 17.400 8.400" stroke-width="1.900"/><path d="M4 9.300C6 10 8.600 9.800 10.600 8.200C12.600 9.800 15.200 10 17.200 9.300" stroke-width="1.500"/><path d="M8.100 11.400v3.200M12.900 11.400v3.200" stroke-width="1.700" stroke-linecap="round"/></g></svg>
  <svg class="abs" style="left:1617px;top:3px" width="16" height="19" viewBox="0 0 16 19"><path d="M8 1.400c-3.400 0-6 2.600-6 6v5.600L0.900 15.100h14.200L14 13V7.400c0-3.400-2.600-6-6-6z" fill="none" stroke="#d8d8d8" stroke-width="1.400" stroke-linejoin="round"/><path d="M6.200 15.600a1.800 1.800 0 0 0 3.600 0" fill="none" stroke="#d8d8d8" stroke-width="1.300"/></svg>
</div>
</div>

</body></html>
